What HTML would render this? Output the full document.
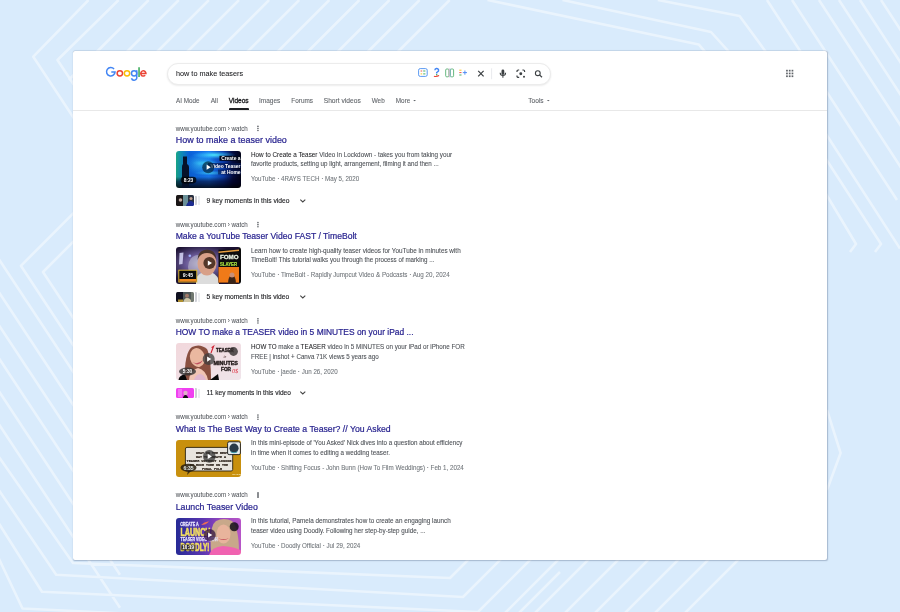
<!DOCTYPE html>
<html><head><meta charset="utf-8"><style>html,body{margin:0;padding:0;width:900px;height:612px;overflow:hidden}
body{background:#d9ebfc;position:relative;font-family:"Liberation Sans",sans-serif}
.bg{position:absolute;left:0;top:0;filter:blur(0.6px)}
.card{position:absolute;left:73px;top:51px;width:753.6px;height:508.8px;background:#fff;border-radius:2px;box-shadow:0 -0.4px 0.5px rgba(120,140,170,.3),0.7px 0.7px 1.2px rgba(80,100,130,.38)}
.t{position:absolute;white-space:nowrap;line-height:1}
.t b{color:#202124;font-weight:400;-webkit-text-stroke:0.22px #202124}
.sbox{position:absolute;left:166.7px;top:62.8px;width:384.4px;height:22.4px;border-radius:11.2px;box-sizing:border-box;border:0.6px solid #ececec;box-shadow:0 0.8px 2px rgba(0,0,0,.09);background:#fff}
.uline{position:absolute;left:229px;top:108.3px;width:19.8px;height:1.8px;background:#202124;border-radius:1px 1px 0 0}
.sep{position:absolute;left:73px;top:109.6px;width:754px;height:0.9px;background:#e8e8e8}
.thumb{position:absolute;left:175.6px;width:65.9px;height:37px;border-radius:3px;overflow:hidden}
.thumb svg,.km svg{display:block;filter:blur(0.25px)}
.km{position:absolute;left:175.7px;width:18.4px;height:10.4px;border-radius:1.5px;overflow:hidden}
.kme1{position:absolute;left:194.8px;width:1.8px;height:9.8px;background:#cfd0d6;border-radius:0 1px 1px 0}
.kme2{position:absolute;left:198.2px;width:1.4px;height:9px;background:#eceef1}
.dots{position:absolute;left:257.2px;width:1.5px;height:6px}
.dots i{display:block;width:1.5px;height:1.5px;border-radius:50%;background:#5f6368;margin-bottom:0.55px}
.chev{position:absolute;left:299px}
.abs{position:absolute}
.txt{position:absolute;left:0;top:0;font-family:"Liberation Sans",sans-serif;will-change:transform;filter:blur(0.2px)}
.txt .b{fill:#202124;stroke:#202124;stroke-width:0.06px}
</style></head>
<body>
<svg class="bg" width="900" height="612" viewBox="0 0 900 612"><path d="M88.5 0.0 L33.3 56.7 L113.0 177.5 M118.6 0.0 L57.5 60.0 L100.0 124.4 M148.7 0.0 L68.7 80.0 M178.8 0.0 L98.8 80.0 M208.9 0.0 L128.9 80.0 M239.0 0.0 L159.0 80.0 M269.1 0.0 L189.1 80.0 M299.2 0.0 L219.2 80.0 M329.3 0.0 L249.3 80.0 M359.4 0.0 L279.4 80.0 M389.5 0.0 L309.5 80.0 M419.6 0.0 L339.6 80.0 M449.7 0.0 L369.7 80.0 M-5.0 550.4 L22.5 608.5 L500.0 632.0 L560.0 572.0 M-5.0 517.4 L42.0 591.7 L478.0 612.0 L538.0 552.0 M-5.0 484.4 L56.2 574.8 L463.0 597.0 L523.0 537.0 M-5.0 451.4 L73.0 563.0 L450.0 578.0 L510.0 518.0 M-5.0 418.4 L120.0 607.8 M-5.0 385.4 L120.0 574.8 M-5.0 352.4 L120.0 541.8 M-5.0 319.4 L120.0 508.8 M-5.0 286.4 L120.0 475.8 M-5.0 253.4 L120.0 442.8 M83.0 203.7 L20.9 265.8 L120.0 416.0 M83.0 232.0 L43.0 272.0 L120.0 388.7 M498.0 620.0 L568.0 550.0 M528.0 620.0 L598.0 550.0 M558.0 620.0 L628.0 550.0 M588.0 620.0 L658.0 550.0 M618.0 620.0 L688.0 550.0 M648.0 620.0 L718.0 550.0 M678.0 620.0 L748.0 550.0 M487.5 0.0 L698.7 44.4 L826.0 194.0 L856.0 244.0 L850.0 252.0 M562.5 0.0 L711.0 32.0 L826.0 159.0 L881.0 244.0 L875.0 252.0 M657.8 0.0 L739.6 16.0 L826.0 134.0 L900.0 248.6 M767.0 0.0 L897.0 200.0 M792.0 0.0 L922.0 200.0 M819.0 0.0 L949.0 200.0 M839.0 0.0 L969.0 200.0 M860.0 0.0 L990.0 200.0 M881.0 0.0 L1011.0 200.0 M827.0 410.0 L840.6 453.0 L827.0 490.0" fill="none" stroke="#fff" stroke-opacity="0.45" stroke-width="2.6" stroke-linejoin="round"/></svg>
<div class="card"></div>
<svg class="abs" style="left:100px;top:60px" width="52" height="24" viewBox="100 60 52 24">
 <g fill="none" stroke-width="1.5">
  <path d="M114.06 69.02 A4.25 4.25 0 1 0 115.05 71.9 L111.3 71.9" stroke="#4285f4"/>
  <circle cx="119.85" cy="73.35" r="2.7" stroke="#ea4335"/>
  <circle cx="127.0" cy="73.35" r="2.7" stroke="#fbbc05"/>
  <circle cx="134.1" cy="73.3" r="2.65" stroke="#4285f4"/>
  <path d="M136.75 70.2 V77 A2.65 2.5 0 0 1 131.5 78.3" stroke="#4285f4"/>
  <path d="M139.05 67.3 V76.9" stroke="#34a853"/>
  <path d="M140.9 73.4 H145.95 A2.6 2.65 0 1 0 145.2 75.3" stroke="#ea4335"/>
 </g>
</svg>
<div class="sbox"></div>
<svg class="abs" style="left:410px;top:62px" width="140" height="22" viewBox="410 62 140 22">
 <rect x="418.6" y="68.6" width="8.6" height="7.8" rx="1.6" fill="none" stroke="#4a8ef0" stroke-width="0.9"/>
 <path d="M420.6 71 H422.2" stroke="#ea4335" stroke-width="0.9"/>
 <path d="M423.2 71 H425.4" stroke="#34a853" stroke-width="0.9"/>
 <path d="M420.6 73.9 H422.2" stroke="#fbbc05" stroke-width="0.9"/>
 <path d="M423.2 73.9 H425.4" stroke="#34a853" stroke-width="0.9"/>
 <path d="M434.9 70.2 A1.85 1.75 0 1 1 437.6 71.8 L436.7 72.5 V73.5" fill="none" stroke="#4285f4" stroke-width="1.45"/>
 <circle cx="436.7" cy="74.8" r="0.75" fill="#34a853"/>
 <path d="M433.9 76.2 Q436.5 76.9 439.1 75.6" fill="none" stroke="#ea4335" stroke-width="1.1"/>
 <rect x="445.7" y="69" width="3.2" height="7.8" rx="1" fill="none" stroke="#55b070" stroke-width="0.9"/>
 <rect x="450.4" y="69" width="3.2" height="7.8" rx="1" fill="none" stroke="#55b070" stroke-width="0.9"/>
 <path d="M449.2 68.6 V77.2" stroke="#f0a0c0" stroke-width="0.7"/><path d="M450.1 68.4 V77.4" stroke="#8ab0f0" stroke-width="0.6"/>
 <path d="M459.3 70.2 H461.5" stroke="#fbbc05" stroke-width="0.9"/>
 <path d="M459.3 72.6 H461.5" stroke="#ea4335" stroke-width="0.9"/>
 <path d="M459.3 75.0 H461.5" stroke="#34a853" stroke-width="0.9"/>
 <path d="M462.8 72.6 H467 M464.9 70.5 V74.7" stroke="#4285f4" stroke-width="0.9"/>
 <path d="M478.2 70.8 L483.6 76.3 M483.6 70.8 L478.2 76.3" stroke="#3c4043" stroke-width="1.2"/>
 <path d="M491.6 68.3 V79.2" stroke="#dadce0" stroke-width="0.6"/>
 <rect x="501.5" y="69.5" width="2.8" height="5.4" rx="1.4" fill="#3c4043"/>
 <path d="M500.2 72.8 A2.7 2.7 0 0 0 505.6 72.8 M502.9 75.6 V77.7" fill="none" stroke="#3c4043" stroke-width="1.05"/>
 <path d="M517 72 V71.2 A1.2 1.2 0 0 1 518.2 70 H519.2 M522.4 70 H523.4 A1.2 1.2 0 0 1 524.6 71.2 V72 M517 75.4 V76.2 A1.2 1.2 0 0 0 518.2 77.4 H519.2" fill="none" stroke="#3c4043" stroke-width="1.2"/>
 <circle cx="520.8" cy="73.7" r="1.45" fill="#3c4043"/>
 <circle cx="524" cy="76.7" r="1" fill="#3c4043"/>
 <circle cx="537.8" cy="73.2" r="2.4" fill="none" stroke="#3c4043" stroke-width="1.1"/>
 <path d="M539.5 74.9 L542 77.3" stroke="#3c4043" stroke-width="1.2"/>
</svg>
<svg class="abs" style="left:784px;top:68px" width="12" height="12" viewBox="784 68 12 12">
 <g fill="#5f6368">
  <rect x="786.1" y="69.8" width="1.7" height="1.7"/><rect x="788.85" y="69.8" width="1.7" height="1.7"/><rect x="791.6" y="69.8" width="1.7" height="1.7"/>
  <rect x="786.1" y="72.6" width="1.7" height="1.7"/><rect x="788.85" y="72.6" width="1.7" height="1.7"/><rect x="791.6" y="72.6" width="1.7" height="1.7"/>
  <rect x="786.1" y="75.4" width="1.7" height="1.7"/><rect x="788.85" y="75.4" width="1.7" height="1.7"/><rect x="791.6" y="75.4" width="1.7" height="1.7"/>
 </g>
</svg>
<svg class="abs" style="left:410px;top:96px" width="145" height="8" viewBox="410 96 145 8">
 <path d="M413.2 99.9 H416 L414.6 101.3 Z" fill="#5f6368"/>
 <path d="M546.9 99.9 H549.7 L548.3 101.3 Z" fill="#5f6368"/>
</svg>
<div class="uline"></div><div class="sep"></div>

<svg class="abs" style="left:255px;top:124px" width="6" height="9" viewBox="255 124 6 9"><g fill="#5f6368"><circle cx="257.95" cy="126.4" r="0.8"/><circle cx="257.95" cy="128.45" r="0.8"/><circle cx="257.95" cy="130.5" r="0.8"/></g></svg>
<div class="thumb" style="top:151px"><svg width="66" height="37" viewBox="0 0 66 37"><defs>
<linearGradient id="g1" x1="0" y1="0" x2="1" y2="0"><stop offset="0" stop-color="#1aa888"/><stop offset=".07" stop-color="#1090b0"/><stop offset=".2" stop-color="#0a60d8"/><stop offset=".5" stop-color="#1878f0"/><stop offset=".72" stop-color="#0a3aa8"/><stop offset=".86" stop-color="#040c40"/><stop offset="1" stop-color="#000010"/></linearGradient>
<linearGradient id="g1b" x1="0" y1="0" x2="0" y2="1"><stop offset="0" stop-color="#000" stop-opacity="0"/><stop offset=".7" stop-color="#000" stop-opacity="0.05"/><stop offset=".82" stop-color="#000020" stop-opacity=".6"/><stop offset="1" stop-color="#000" stop-opacity=".85"/></linearGradient>
<radialGradient id="g1c" cx=".5" cy=".5" r=".5"><stop offset="0" stop-color="#50f0ff" stop-opacity=".95"/><stop offset="1" stop-color="#30c0ff" stop-opacity="0"/></radialGradient>
</defs>
<rect width="66" height="37" fill="url(#g1)"/>
<ellipse cx="24" cy="13" rx="16" ry="11" fill="url(#g1c)" opacity=".55"/><ellipse cx="38" cy="4" rx="22" ry="4" fill="url(#g1c)"/>
<ellipse cx="30" cy="12" rx="14" ry="3" fill="url(#g1c)" opacity=".6"/>
<ellipse cx="34" cy="22" rx="16" ry="2.5" fill="url(#g1c)" opacity=".7"/>
<rect width="66" height="37" fill="url(#g1b)"/>
<path d="M7 5.5 H11 V13 Q13 14 13 16 V37 H6 V16 Q6 14 7 13 Z" fill="#06122a"/>
<rect x="43.5" y="4.8" width="22" height="5" fill="#02081a"/>
<rect x="32" y="12" width="34" height="5" fill="#051850" opacity=".7"/>
<rect x="42" y="18.5" width="24" height="5" fill="#051850" opacity=".6"/>
<g font-family="Liberation Sans" font-weight="700" fill="#fff" text-anchor="end" font-size="4.9">
<text x="64.5" y="9.2">Create a</text><text x="64.5" y="16.5">Video Teaser</text><text x="64.5" y="23">at Home</text></g>
<circle cx="32.2" cy="16.2" r="6" fill="rgba(0,30,50,.65)"/><path d="M30.6 13.6 L34.800000000000004 16.2 L30.6 18.8 Z" fill="#fff"/>
<rect x="4.6" y="25.8" width="15.8" height="6.6" rx="3.3" fill="rgba(0,0,0,.75)"/>
<text x="12.5" y="31" font-size="4.8" fill="#fff" text-anchor="middle" font-family="Liberation Sans" font-weight="700">8:23</text></svg></div>
<div class="km" style="top:195.3px"><svg width="19" height="11" viewBox="0 0 19 11"><rect width="19" height="11" fill="#3a4a50"/><rect x="0" y="0" width="7" height="11" fill="#1a1616"/><circle cx="4.5" cy="5" r="1.8" fill="#c0a8a0"/><rect x="7" y="0" width="5" height="11" fill="#6a9098"/><rect x="12" y="0" width="7" height="11" fill="#283040"/><path d="M10 11 Q12 5.5 15 6 Q18 6.5 19 11Z" fill="#1c2c90"/><circle cx="15" cy="3.6" r="1.5" fill="#c0a090"/></svg></div><div class="kme1" style="top:195.6px"></div><div class="kme2" style="top:196.3px"></div>
<svg class="chev" style="top:197px" width="8" height="7" viewBox="0 0 8 7"><path d="M1.3 2.6 L3.8 5 L6.3 2.6" fill="none" stroke="#444" stroke-width="1.05"/></svg>
<svg class="abs" style="left:255px;top:220px" width="6" height="9" viewBox="255 220 6 9"><g fill="#5f6368"><circle cx="257.95" cy="222.6" r="0.8"/><circle cx="257.95" cy="224.64999999999998" r="0.8"/><circle cx="257.95" cy="226.7" r="0.8"/></g></svg>
<div class="thumb" style="top:247.2px"><svg width="66" height="37" viewBox="0 0 66 37"><defs>
<radialGradient id="g2" cx=".4" cy=".45" r=".55"><stop offset="0" stop-color="#b8b4c8"/><stop offset=".45" stop-color="#6a5a98"/><stop offset="1" stop-color="#1a1030"/></radialGradient></defs>
<rect width="66" height="37" fill="url(#g2)"/>
<path d="M3.5 6 L7.5 5.5 L6.5 17 L3 17.5 Z" fill="#d8d8f8" opacity=".85"/>
<circle cx="13.8" cy="8.7" r="1.3" fill="#a0b0ff"/><ellipse cx="22" cy="20" rx="10" ry="12" fill="#c8c8d8" opacity=".5"/>
<path d="M20 37 Q19 28 27 25 L35 25 Q43 28 43 37 Z" fill="#dcdcdc"/>
<ellipse cx="31" cy="16.5" rx="9.5" ry="12" fill="#d8a088"/>
<path d="M21.5 13 Q22 3 31 2.5 Q40 3 40.5 13 Q38 6 31 6 Q24 6 21.5 13 Z" fill="#4a3428"/>
<rect x="42.5" y="2.7" width="20.5" height="33" fill="#0c0c0c"/>
<path d="M42.5 4.6 L63 2.5 L63 4 L42.5 6 Z" fill="#e8a040"/>
<rect x="42.5" y="20" width="20.5" height="15.6" fill="#f07a18"/>
<rect x="63" y="0" width="3" height="37" fill="#0a0a0a"/>
<text x="44" y="12" font-size="6.2" fill="#e8f0e0" stroke="#e8f0e0" stroke-width=".3" font-family="Liberation Sans" font-weight="700">FOMO</text>
<text x="44" y="18.5" font-size="4.9" fill="#a8e040" stroke="#a8e040" stroke-width=".2" textLength="17" lengthAdjust="spacingAndGlyphs" font-family="Liberation Sans" font-weight="700">SLAYER</text>
<path d="M52 37 Q52 29 56 27.5 Q60 29 60 37 Z" fill="#3a2418"/>
<circle cx="56" cy="28" r="2.5" fill="#c89078"/>
<rect x="2.8" y="23.2" width="18" height="11.8" fill="#0a0a0a" stroke="#e8c030" stroke-width=".9"/>
<rect x="3.3" y="32" width="17" height="2.6" fill="#f08a20"/>
<text x="12" y="30.2" font-size="5.2" fill="#fff" text-anchor="middle" font-family="Liberation Sans" font-weight="700">9:45</text>
<circle cx="33.4" cy="16.1" r="6" fill="rgba(40,20,10,.75)"/><path d="M31.799999999999997 13.500000000000002 L36.0 16.1 L31.799999999999997 18.700000000000003 Z" fill="#fff"/></svg></div>
<div class="km" style="top:291.5px"><svg width="19" height="11" viewBox="0 0 19 11"><rect width="19" height="11" fill="#505858"/><rect x="0" y="0" width="7" height="11" fill="#101020"/><rect x="2" y="7.5" width="5" height="2.5" fill="#b09030"/><path d="M7 11 Q8 6 11 6 Q15 6 16 11Z" fill="#d0c8a8"/><circle cx="11" cy="3.8" r="2" fill="#a07868"/><rect x="15" y="0" width="4" height="11" fill="#707870"/></svg></div><div class="kme1" style="top:291.8px"></div><div class="kme2" style="top:292.5px"></div>
<svg class="chev" style="top:293.2px" width="8" height="7" viewBox="0 0 8 7"><path d="M1.3 2.6 L3.8 5 L6.3 2.6" fill="none" stroke="#444" stroke-width="1.05"/></svg>
<svg class="abs" style="left:255px;top:316px" width="6" height="9" viewBox="255 316 6 9"><g fill="#5f6368"><circle cx="257.95" cy="318.84999999999997" r="0.8"/><circle cx="257.95" cy="320.9" r="0.8"/><circle cx="257.95" cy="322.95" r="0.8"/></g></svg>
<div class="thumb" style="top:343.45px"><svg width="66" height="37" viewBox="0 0 66 37"><defs><linearGradient id="g3" x1="0" y1="0" x2="1" y2="1"><stop offset="0" stop-color="#f2d8dc"/><stop offset="1" stop-color="#efe4ea"/></linearGradient></defs>
<rect width="66" height="37" fill="url(#g3)"/>
<path d="M9 37 Q8 10 16 4 Q24 0 31 6 Q35 14 35 37 Z" fill="#8a5040"/>
<ellipse cx="21.5" cy="14.5" rx="7.5" ry="9.5" fill="#eab8a0" transform="rotate(-15 21.5 14.5)"/>
<path d="M16 19 Q22 22 27 17 Q25 21 21 21.5 Z" fill="#c05060"/>
<path d="M13 37 Q14 27 22 25 Q30 27 32 37 Z" fill="#f0c4b4"/>
<path d="M18 37 Q20 31 24 31 Q28 31 30 37 Z" fill="#e0b8d0"/>
<path d="M2.5 37 Q3 32 9 31.5 L11 37 Z" fill="#080808"/>
<path d="M34 37 L42 31 L43 37 Z" fill="#080808"/>
<path d="M35 10 L37.6 3.2 L35.6 4.6" fill="none" stroke="#d02030" stroke-width="1.1"/>
<g font-family="Liberation Sans" font-weight="700" fill="#201818" stroke="#201818" stroke-width=".35">
<text x="40" y="9.2" font-size="4.6" textLength="17.5" lengthAdjust="spacingAndGlyphs">TEASER</text>
<text x="37.5" y="22.3" font-size="4.8" textLength="24.5" lengthAdjust="spacingAndGlyphs">MINUTES</text>
<text x="45" y="28.3" font-size="4.6" textLength="10" lengthAdjust="spacingAndGlyphs">FOR</text></g>
<text x="47.5" y="15" font-size="3.6" fill="#503030" font-family="Liberation Serif" font-style="italic">in</text>
<text x="56" y="30" font-size="6.2" fill="#e03040" font-family="Liberation Serif" font-style="italic">0$</text>
<circle cx="57.5" cy="8.5" r="4.4" fill="rgba(50,45,45,.8)"/>
<ellipse cx="11.5" cy="28.5" rx="8.5" ry="4" fill="rgba(50,50,50,.8)"/>
<text x="11.5" y="30.3" font-size="4.8" fill="#fff" text-anchor="middle" font-family="Liberation Sans" font-weight="700">5:30</text>
<circle cx="32.7" cy="16.1" r="6" fill="rgba(60,60,60,.75)"/><path d="M31.1 13.500000000000002 L35.300000000000004 16.1 L31.1 18.700000000000003 Z" fill="#fff"/></svg></div>
<div class="km" style="top:387.75px"><svg width="19" height="11" viewBox="0 0 19 11"><rect width="19" height="11" fill="#f040f0"/><rect x="2" y="1" width="4" height="8" fill="#f890f8" opacity=".6"/><circle cx="9.5" cy="5" r="2.2" fill="#e0b0c8"/><path d="M6.5 11 Q7.5 7 9.5 7 Q11.5 7 12.5 11Z" fill="#101010"/></svg></div><div class="kme1" style="top:388.05px"></div><div class="kme2" style="top:388.75px"></div>
<svg class="chev" style="top:389.45px" width="8" height="7" viewBox="0 0 8 7"><path d="M1.3 2.6 L3.8 5 L6.3 2.6" fill="none" stroke="#444" stroke-width="1.05"/></svg>
<svg class="abs" style="left:255px;top:412px" width="6" height="9" viewBox="255 412 6 9"><g fill="#5f6368"><circle cx="257.95" cy="415.09999999999997" r="0.8"/><circle cx="257.95" cy="417.15" r="0.8"/><circle cx="257.95" cy="419.2" r="0.8"/></g></svg>
<div class="thumb" style="top:439.7px"><svg width="66" height="37" viewBox="0 0 66 37"><rect width="66" height="37" fill="#c8900e"/>
<rect x="9.4" y="7.4" width="47.3" height="23.6" rx="1.6" fill="#e8e4de" stroke="#2a2210" stroke-width=".9"/>
<g font-family="Liberation Mono" font-size="3.6" font-weight="700" fill="#2a2018" stroke="#2a2018" stroke-width=".2" text-anchor="middle">
<text x="36" y="13.8" textLength="32" lengthAdjust="spacingAndGlyphs">WHAT IS THE BEST</text><text x="35" y="17.8" textLength="30" lengthAdjust="spacingAndGlyphs">WAY TO CREATE A</text><text x="33" y="21.8" textLength="45" lengthAdjust="spacingAndGlyphs">TEASER WITHOUT LOSING</text><text x="33" y="25.8" textLength="38" lengthAdjust="spacingAndGlyphs">SO MUCH TIME ON THE</text><text x="36" y="29.8" textLength="20" lengthAdjust="spacingAndGlyphs">FINAL FILM</text></g>
<rect x="51.6" y="1.8" width="12.8" height="12.8" rx="1.5" fill="#e8ecec" stroke="#1a1a1a" stroke-width=".9"/>
<circle cx="58" cy="8.2" r="4.6" fill="#2a3a48"/>
<path d="M54.5 11 Q58 13.5 61.5 11 L61 12.5 Q58 14 55 12.5Z" fill="#40a0b0"/>
<path d="M12 31 L11 35 L15 31 Z" fill="rgba(40,30,15,.85)"/>
<ellipse cx="12.5" cy="27.7" rx="8" ry="4" fill="rgba(40,30,15,.85)"/>
<text x="12.5" y="29.6" font-size="5" fill="#e8f0f0" text-anchor="middle" font-family="Liberation Sans" font-weight="700">6:35</text>
<text x="61" y="35" font-size="2.2" fill="#f8f0c0" text-anchor="middle" font-family="Liberation Sans" font-weight="700">TRAILER</text>
<circle cx="33.3" cy="16.4" r="6.3" fill="rgba(40,40,40,.7)"/><path d="M31.699999999999996 13.799999999999999 L35.9 16.4 L31.699999999999996 19.0 Z" fill="#fff"/></svg></div>
<div class="dots" style="top:491.9px;height:5.9px;background:#8a8d91;border-radius:0.5px"></div>
<div class="thumb" style="top:517.85px"><svg width="66" height="37" viewBox="0 0 66 37"><defs><linearGradient id="g5" x1="0" y1="0" x2="1" y2="0"><stop offset="0" stop-color="#262a96"/><stop offset=".4" stop-color="#5a36b0"/><stop offset=".7" stop-color="#9a48c0"/><stop offset="1" stop-color="#b856c8"/></linearGradient></defs>
<rect width="66" height="37" fill="url(#g5)"/>
<path d="M35 34 Q33 8 40 3 Q48 -1 56 3 Q63 10 63 34 Z" fill="#c8a88a"/>
<ellipse cx="47.5" cy="16" rx="7" ry="9.5" fill="#e8b49c"/>
<path d="M42 20 Q47.5 24 53 20 Q47.5 22.5 42 20Z" fill="#c04050"/>
<path d="M33 37 Q35 29 47 28 Q60 29 66 33 L66 37 Z" fill="#f062b0"/>
<g font-family="Liberation Sans" font-weight="700">
<text x="4.2" y="8" font-size="5.4" fill="#e8e4ff" stroke="#e8e4ff" stroke-width=".3" textLength="18.5" lengthAdjust="spacingAndGlyphs">CREATE A</text>
<path d="M25 7 Q29 3 33 3.5 Q30 7 25 7Z" fill="#f07050"/>
<text x="4.5" y="17.6" font-size="10.5" fill="#f4e060" stroke="#f4e060" stroke-width=".6" textLength="30" lengthAdjust="spacingAndGlyphs">LAUNCH</text>
<text x="4.5" y="23.3" font-size="4.8" fill="#e8e4ff" stroke="#e8e4ff" stroke-width=".25" textLength="37" lengthAdjust="spacingAndGlyphs">TEASER VIDEO WITH</text>
<text x="4.5" y="33.2" font-size="10" fill="#f4e060" stroke="#f4e060" stroke-width=".6" textLength="29" lengthAdjust="spacingAndGlyphs">DOODLY!</text></g>
<rect x="5" y="26.5" width="14.5" height="6" rx="1" fill="rgba(0,0,0,.55)"/>
<text x="12.2" y="31.2" font-size="4.6" fill="#fff" text-anchor="middle" font-family="Liberation Sans" font-weight="700">10:19</text>
<circle cx="58.2" cy="8.7" r="4.5" fill="rgba(20,15,25,.85)"/>
<circle cx="33.7" cy="17" r="6" fill="rgba(40,10,60,.7)"/><path d="M32.1 14.4 L36.300000000000004 17 L32.1 19.6 Z" fill="#fff"/></svg></div>
<svg class="txt" width="900" height="612" viewBox="0 0 900 612"><text transform="translate(176.00,76.00) scale(0.9726,1)" font-size="7.500" fill="#202124" stroke="#202124" stroke-width="0.06">how to make teasers</text>
<text transform="translate(176.00,103.00) scale(0.9749,1)" font-size="6.500" fill="#5f6368" stroke="#5f6368" stroke-width="0.08">AI Mode</text>
<text transform="translate(210.70,103.00) scale(1.0105,1)" font-size="6.500" fill="#5f6368" stroke="#5f6368" stroke-width="0.08">All</text>
<text transform="translate(259.00,103.00) scale(1.0039,1)" font-size="6.500" fill="#5f6368" stroke="#5f6368" stroke-width="0.08">Images</text>
<text transform="translate(291.30,103.00) scale(0.9850,1)" font-size="6.500" fill="#5f6368" stroke="#5f6368" stroke-width="0.08">Forums</text>
<text transform="translate(323.70,103.00) scale(1.0268,1)" font-size="6.500" fill="#5f6368" stroke="#5f6368" stroke-width="0.08">Short videos</text>
<text transform="translate(371.70,103.00) scale(0.9813,1)" font-size="6.500" fill="#5f6368" stroke="#5f6368" stroke-width="0.08">Web</text>
<text transform="translate(395.80,103.00) scale(0.9791,1)" font-size="6.500" fill="#5f6368" stroke="#5f6368" stroke-width="0.08">More</text>
<text transform="translate(528.30,103.00) scale(1.0149,1)" font-size="6.500" fill="#5f6368" stroke="#5f6368" stroke-width="0.08">Tools</text>
<text transform="translate(228.70,103.00) scale(1.0122,1)" font-size="6.500" fill="#202124" stroke="#202124" stroke-width="0.3">Videos</text>
<text transform="translate(175.70,131.00) scale(0.9153,1)" font-size="6.800" fill="#4d5156" stroke="#4d5156" stroke-width="0.04">www.youtube.com › watch</text>
<text transform="translate(175.70,143.00) scale(1.0680,1)" font-size="8.400" fill="#28238f" stroke="#28238f" stroke-width="0.2">How to make a teaser video</text>
<text transform="translate(251.00,157.00) scale(0.9340,1)" font-size="6.800" fill="#4d5156" stroke="#4d5156" stroke-width="0.09"><tspan class="b">How to Create a Teaser</tspan> Video in Lockdown - takes you from taking your</text>
<text transform="translate(251.00,166.00) scale(0.9177,1)" font-size="6.800" fill="#4d5156" stroke="#4d5156" stroke-width="0.09">favorite products, setting up light, arrangement, filming it and then ...</text>
<text transform="translate(251.00,181.00) scale(0.9449,1)" font-size="6.600" fill="#70757a" stroke="#70757a" stroke-width="0.08">YouTube · 4RAYS TECH · May 5, 2020</text>
<text transform="translate(206.60,203.00) scale(0.9761,1)" font-size="6.900" fill="#202124" stroke="#202124" stroke-width="0.12">9 key moments in this video</text>
<text transform="translate(175.70,227.00) scale(0.9153,1)" font-size="6.800" fill="#4d5156" stroke="#4d5156" stroke-width="0.04">www.youtube.com › watch</text>
<text transform="translate(175.70,239.00) scale(1.0263,1)" font-size="8.400" fill="#28238f" stroke="#28238f" stroke-width="0.2">Make a YouTube Teaser Video FAST / TimeBolt</text>
<text transform="translate(251.00,253.00) scale(0.9359,1)" font-size="6.800" fill="#4d5156" stroke="#4d5156" stroke-width="0.09">Learn how to create high-quality teaser videos for YouTube in minutes with</text>
<text transform="translate(251.00,262.00) scale(0.9171,1)" font-size="6.800" fill="#4d5156" stroke="#4d5156" stroke-width="0.09">TimeBolt! This tutorial walks you through the process of marking ...</text>
<text transform="translate(251.00,277.00) scale(0.9454,1)" font-size="6.600" fill="#70757a" stroke="#70757a" stroke-width="0.08">YouTube · TimeBolt - Rapidly Jumpcut Video &amp; Podcasts · Aug 20, 2024</text>
<text transform="translate(206.60,299.00) scale(0.9714,1)" font-size="6.900" fill="#202124" stroke="#202124" stroke-width="0.12">5 key moments in this video</text>
<text transform="translate(175.70,323.00) scale(0.9153,1)" font-size="6.800" fill="#4d5156" stroke="#4d5156" stroke-width="0.04">www.youtube.com › watch</text>
<text transform="translate(175.70,335.00) scale(1.0044,1)" font-size="8.400" fill="#28238f" stroke="#28238f" stroke-width="0.2">HOW TO make a TEASER video in 5 MINUTES on your iPad ...</text>
<text transform="translate(251.00,349.00) scale(0.9246,1)" font-size="6.800" fill="#4d5156" stroke="#4d5156" stroke-width="0.09"><tspan class="b">HOW TO</tspan> make a <tspan class="b">TEASER</tspan> video in 5 MINUTES on your iPad or iPhone FOR</text>
<text transform="translate(251.00,359.00) scale(0.9166,1)" font-size="6.800" fill="#4d5156" stroke="#4d5156" stroke-width="0.09">FREE | inshot + Canva 71K views 5 years ago</text>
<text transform="translate(251.00,374.00) scale(0.9426,1)" font-size="6.600" fill="#70757a" stroke="#70757a" stroke-width="0.08">YouTube · jaede · Jun 26, 2020</text>
<text transform="translate(206.60,395.00) scale(0.9541,1)" font-size="6.900" fill="#202124" stroke="#202124" stroke-width="0.12">11 key moments in this video</text>
<text transform="translate(175.70,419.00) scale(0.9153,1)" font-size="6.800" fill="#4d5156" stroke="#4d5156" stroke-width="0.04">www.youtube.com › watch</text>
<text transform="translate(175.70,432.00) scale(1.0365,1)" font-size="8.400" fill="#28238f" stroke="#28238f" stroke-width="0.2">What Is The Best Way to Create a Teaser? // You Asked</text>
<text transform="translate(251.00,445.00) scale(0.9192,1)" font-size="6.800" fill="#4d5156" stroke="#4d5156" stroke-width="0.09">In this mini-episode of 'You Asked' Nick dives into a question about efficiency</text>
<text transform="translate(251.00,455.00) scale(0.9269,1)" font-size="6.800" fill="#4d5156" stroke="#4d5156" stroke-width="0.09">in time when it comes to editing a wedding teaser.</text>
<text transform="translate(251.00,470.00) scale(0.9459,1)" font-size="6.600" fill="#70757a" stroke="#70757a" stroke-width="0.08">YouTube · Shifting Focus - John Bunn (How To Film Weddings) · Feb 1, 2024</text>
<text transform="translate(175.70,497.00) scale(0.9153,1)" font-size="6.800" fill="#4d5156" stroke="#4d5156" stroke-width="0.04">www.youtube.com › watch</text>
<text transform="translate(175.70,510.00) scale(1.0468,1)" font-size="8.400" fill="#28238f" stroke="#28238f" stroke-width="0.2">Launch Teaser Video</text>
<text transform="translate(251.00,523.00) scale(0.9341,1)" font-size="6.800" fill="#4d5156" stroke="#4d5156" stroke-width="0.09">In this tutorial, Pamela demonstrates how to create an engaging launch</text>
<text transform="translate(251.00,533.00) scale(0.9232,1)" font-size="6.800" fill="#4d5156" stroke="#4d5156" stroke-width="0.09">teaser video using Doodly. Following her step-by-step guide, ...</text>
<text transform="translate(251.00,548.00) scale(0.9435,1)" font-size="6.600" fill="#70757a" stroke="#70757a" stroke-width="0.08">YouTube · Doodly Official · Jul 29, 2024</text></svg>
</body></html>
